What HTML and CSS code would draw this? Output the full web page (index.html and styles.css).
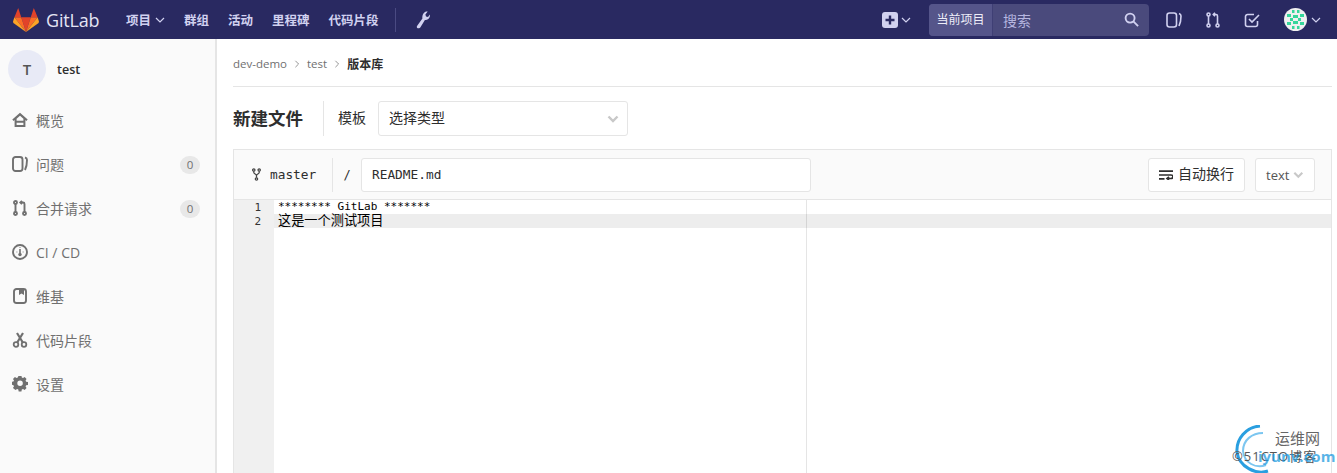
FILE: index.html
```html
<!DOCTYPE html>
<html lang="zh">
<head>
<meta charset="utf-8">
<title>新建文件</title>
<link rel="stylesheet" href="styles.css">
</head>
<body>
<header class="topbar">
  <a class="brand">
    <svg class="logo" viewBox="0 0 26 24" width="26" height="24">
      <polygon points="13,24 17.8,9.2 8.2,9.2" fill="#e24329"/>
      <polygon points="13,24 8.2,9.2 1.4,9.2" fill="#fc6d26"/>
      <polygon points="1.4,9.2 0,13.6 0.4,15 13,24" fill="#fca326"/>
      <polygon points="1.4,9.2 8.2,9.2 5.2,0" fill="#e24329"/>
      <polygon points="13,24 17.8,9.2 24.6,9.2" fill="#fc6d26"/>
      <polygon points="24.6,9.2 26,13.6 25.6,15 13,24" fill="#fca326"/>
      <polygon points="24.6,9.2 17.8,9.2 20.8,0" fill="#e24329"/>
    </svg>
    <span class="brand-name">GitLab</span>
  </a>
  <nav class="topnav">
    <a class="topnav-item">项目<svg class="chev" viewBox="0 0 10 6" width="10" height="6"><path d="M1 1l4 4 4-4"/></svg></a>
    <a class="topnav-item">群组</a>
    <a class="topnav-item">活动</a>
    <a class="topnav-item">里程碑</a>
    <a class="topnav-item">代码片段</a>
  </nav>
  <span class="topdivider"></span>
  <svg class="wrench" viewBox="0 0 14 18" width="14" height="18"><path d="M3 17.2c-1 .5-2.300-.2-2.200-1.400 0-.4.2-.8.4-1.100L6.400 7.400C6 5 6.900 2.200 9 1c.9-.4 1.800-.5 2.700-.4L9.400 3.400l.6 2 2 .5 1.900-2.500c.3 1.900-.4 3.900-2 4.900-1 .6-2 .8-3 .6L4.300 16.400c-.4.4-.8.700-1.300.8z"/></svg>
  <div class="topright">
    <span class="plus"><svg viewBox="0 0 16 16" width="16" height="16"><rect width="16" height="16" rx="3" fill="#d1d1f0"/><path d="M8 3.500v9M3.500 8h9" stroke="#292961" stroke-width="2.400"/></svg><svg class="chev" viewBox="0 0 10 6" width="10" height="6"><path d="M1 1l4 4 4-4"/></svg></span>
    <div class="search">
      <span class="search-scope">当前项目</span>
      <span class="search-input">搜索</span>
      <svg class="search-icon" viewBox="0 0 16 16" width="15" height="15"><circle cx="6.500" cy="6.500" r="4.800"/><path d="M10 10l5 5"/></svg>
    </div>
    <svg class="top-icon" viewBox="0 0 16 16" width="16" height="16"><rect x="1" y="1" width="9.500" height="14" rx="2.500"/><path d="M13 1.500c1.300.4 2 1.300 2 2.500 0 3-1 8-2 10"/></svg>
    <svg class="top-icon" viewBox="0 0 14 16" width="14" height="16"><circle cx="2.500" cy="2.500" r="1.500"/><circle cx="2.500" cy="13.500" r="1.500"/><circle cx="11.500" cy="13.500" r="1.500"/><path d="M2.500 4v8M11.500 12V4c0-1-.5-1.500-1.500-1.500H7.500M9 .8L7.300 2.500 9 4.200"/></svg>
    <svg class="top-icon" viewBox="0 0 16 16" width="16" height="16"><path d="M13.500 9v3.500a2 2 0 0 1-2 2h-8a2 2 0 0 1-2-2v-8a2 2 0 0 1 2-2H10M5 7l3 3 7-7"/></svg>
    <span class="avatar-wrap">
      <svg class="identicon" viewBox="0 0 23 23" width="23" height="23">
        <circle cx="11.500" cy="11.500" r="11.500" fill="#f0f0f0"/>
        <g fill="#36d69b"><rect x="8" y="2" width="2.500" height="3"/><rect x="13" y="2" width="2.500" height="3"/><rect x="3" y="6" width="4" height="3"/><rect x="16" y="6" width="4" height="3"/><rect x="9" y="7" width="5" height="3"/><rect x="6" y="10" width="3" height="3"/><rect x="14" y="10" width="3" height="3"/><rect x="3" y="14" width="4" height="3"/><rect x="16" y="14" width="4" height="3"/><rect x="9" y="13" width="5" height="3"/><rect x="8" y="18" width="2.500" height="3"/><rect x="13" y="18" width="2.500" height="3"/></g>
      </svg>
      <svg class="chev" viewBox="0 0 10 6" width="10" height="6"><path d="M1 1l4 4 4-4"/></svg>
    </span>
  </div>
</header>

<div class="layout">
  <aside class="sidebar">
    <div class="project">
      <span class="project-avatar">T</span>
      <span class="project-name">test</span>
    </div>
    <ul class="sidenav">
      <li class="sidenav-item"><svg class="side-icon" viewBox="0 0 16 16" width="16" height="16"><path class="solid" d="M8 .8L.3 7.500l1.300 1.500 1-.9V15h10.800V8.100l1 .9 1.300-1.500zM4.600 6.800L8 3.800l3.400 3v2H4.600zm0 4h6.800V13H4.600z"/></svg>概览</li>
      <li class="sidenav-item"><svg class="side-icon" viewBox="0 0 16 16" width="16" height="16"><rect x="1" y="1" width="9.500" height="14" rx="2.500"/><path d="M13 1.500c1.300.4 2 1.300 2 2.500 0 3-1 8-2 10"/></svg>问题<span class="count">0</span></li>
      <li class="sidenav-item"><svg class="side-icon" viewBox="0 0 14 16" width="16" height="16"><circle cx="2.500" cy="2.500" r="1.500"/><circle cx="2.500" cy="13.500" r="1.500"/><circle cx="11.500" cy="13.500" r="1.500"/><path d="M2.500 4v8M11.500 12V4c0-1-.5-1.500-1.500-1.500H7.500M9 .8L7.300 2.500 9 4.200"/></svg>合并请求<span class="count">0</span></li>
      <li class="sidenav-item"><svg class="side-icon" viewBox="0 0 16 16" width="16" height="16"><circle cx="8" cy="8" r="7"/><path d="M8 5v4" stroke-width="1.600"/><circle cx="8" cy="10.500" r="1.700" class="solid"/><path d="M4.500 8h.8M10.700 8h.8M8 3v.8" stroke-width="1.200"/></svg>CI / CD</li>
      <li class="sidenav-item"><svg class="side-icon" viewBox="0 0 16 16" width="16" height="16"><rect x="2" y="1" width="12" height="14" rx="2.500"/><path class="solid" d="M7 1h5v6l-2.500-1.500L7 7z"/></svg>维基</li>
      <li class="sidenav-item"><svg class="side-icon" viewBox="0 0 16 16" width="16" height="16"><circle cx="4" cy="12.500" r="2.300" stroke-width="1.800"/><circle cx="12" cy="12.500" r="2.300" stroke-width="1.800"/><path d="M5.200 10.500L11 1M10.800 10.500L5 1" stroke-width="2.200"/></svg>代码片段</li>
      <li class="sidenav-item"><svg class="side-icon" viewBox="0 0 16 16" width="16" height="16"><path class="solid" fill-rule="evenodd" d="M6.500 0h3l.4 2.100 1.300.6 1.800-1.100 2.100 2.100-1.100 1.800.6 1.300 2.100.4v3l-2.100.4-.6 1.300 1.100 1.800-2.100 2.100-1.800-1.100-1.300.6-.4 2.100h-3l-.4-2.100-1.300-.6-1.800 1.100L.3 13.600l1.100-1.800-.6-1.300L-1.300 10V7l2.100-.4.600-1.300L.3 3.700l2.100-2.100 1.800 1.100 1.300-.6zM8 5.500a3 3 0 1 0 0 6 3 3 0 0 0 0-6z" transform="translate(.7 -.5) scale(.92)"/></svg>设置</li>
    </ul>
  </aside>

  <main class="content">
    <div class="breadcrumbs">
      <a class="crumb">dev-demo</a>
      <svg class="crumb-sep" viewBox="0 0 6 10" width="6" height="8"><path d="M1 1l4 4-4 4"/></svg>
      <a class="crumb">test</a>
      <svg class="crumb-sep" viewBox="0 0 6 10" width="6" height="8"><path d="M1 1l4 4-4 4"/></svg>
      <strong class="crumb-current">版本库</strong>
    </div>

    <div class="title-row">
      <h1 class="page-title">新建文件</h1>
      <span class="title-divider"></span>
      <span class="template-label">模板</span>
      <div class="select template-select">选择类型<svg class="select-chev" viewBox="0 0 12 8" width="12" height="8"><path d="M1.500 1.500L6 6l4.500-4.500"/></svg></div>
    </div>

    <section class="file-holder">
      <div class="file-bar">
        <span class="branch"><svg class="fork" viewBox="0 0 10 14" width="9" height="13"><circle cx="2" cy="2" r="1.300"/><circle cx="8" cy="2" r="1.300"/><circle cx="5" cy="12" r="1.300"/><path d="M2 3.300v1.500c0 1.500 3 2 3 3.500v2.400M8 3.300v1.500C8 6.300 5 6.800 5 8.300"/></svg>master</span>
        <span class="slash">/</span>
        <div class="filename">README.md</div>
        <div class="file-actions">
          <div class="btn"><svg class="wrap-icon" viewBox="0 0 14 10" width="14" height="10"><path d="M0 1.200h14M0 5h12c1.500 0 2 .8 2 1.500S13.500 8.500 12 8.500H8.500M10 6.800L8 8.500l2 1.500M0 8.800h5.500"/></svg><span class="btn-label">自动换行</span></div>
          <div class="btn mode">text<svg class="select-chev" viewBox="0 0 12 8" width="12" height="8"><path d="M1.500 1.500L6 6l4.500-4.500"/></svg></div>
        </div>
      </div>
      <div class="editor">
        <div class="gutter"><div class="gutter-line">1</div><div class="gutter-line">2</div></div>
        <div class="code">
          <div class="print-margin"></div>
          <div class="code-line">******** GitLab *******</div>
          <div class="code-line active">这是一个测试项目</div>
        </div>
      </div>
    </section>
  </main>
</div>

<div class="watermark">
  <svg class="wm-arc" viewBox="0 0 50 50" width="50" height="50"><path d="M36 46C24 50 7 42 5 27 4 14 14 2 28 1" stroke="#2a9fe0" stroke-width="3" fill="none"/><path d="M34 40C24 44 12 38 11 26 11 15 20 8 31 8" stroke="#7cc6f0" stroke-width="2" fill="none"/></svg>
  <span class="wm-top">运维网</span>
  <span class="wm-gray">©51CTO博客</span>
  <span class="wm-blue">iyunv.com</span>
</div>
</body>
</html>
```
FILE: styles.css
```css
* { box-sizing: border-box; }
html, body { margin: 0; height: 100%; overflow: hidden; }
body {
  font-family: "Open Sans", "Noto Sans CJK SC", sans-serif;
  font-size: 14px;
  color: #2e2e2e;
  background: #fff;
}
.topbar {
  height: 39px;
  background: #292961;
  display: flex;
  align-items: center;
  padding-left: 13px;
  color: #d1d1f0;
}
.brand { display: flex; align-items: center; gap: 7px; }
.brand-name { font-size: 18px; color: #e4e4f4; width: 53px; letter-spacing: -.2px; }
.topnav { display: flex; align-items: center; margin-left: 27px; }
.topnav-item {
  display: flex; align-items: center; gap: 4px;
  font-size: 12.500px; font-weight: 700; color: #d1d1f0;
  margin-right: 19px;
}
.topnav-item:last-child { margin-right: 0; }
.chev { fill: none; stroke: #d1d1f0; stroke-width: 1.200; }
.topdivider { width: 1px; height: 24px; background: #4a4a82; margin-left: 16px; }
.wrench { margin-left: 20px; fill: #d1d1f0; }
.topright { margin-left: auto; display: flex; align-items: center; padding-right: 16px; }
.plus { display: flex; align-items: center; gap: 3px; margin-right: 18px; }
.search {
  width: 220px; height: 32px;
  background: #4a4a7c;
  border-radius: 4px;
  display: flex; align-items: center;
  position: relative;
  margin-right: 17px;
}
.search-scope {
  width: 64px; height: 32px; line-height: 32px; text-align: center;
  font-size: 12px; color: #eeeef8;
  background: #55558a;
  border-right: 1px solid #3f3f75;
  border-radius: 4px 0 0 4px;
}
.search-input { margin-left: 10px; color: #b6b6e0; font-size: 14px; }
.search-icon { position: absolute; right: 10px; top: 8px; fill: none; stroke: #d1d1f0; stroke-width: 2; }
.top-icon { fill: none; stroke: #d1d1f0; stroke-width: 1.600; margin-right: 24px; }
.avatar-wrap { display: flex; align-items: center; gap: 4px; }
.identicon { display: block; }
.layout { display: flex; height: 434px; }
.sidebar {
  width: 217px; flex: none;
  background: #fafafa;
  border-right: 2px solid #e5e5e5;
}
.project { display: flex; align-items: center; height: 59px; padding: 1px 8px 0; }
.project-avatar {
  width: 38px; height: 38px; border-radius: 50%;
  background: #e8eaf6; color: #555;
  font-size: 15px; font-weight: 600;
  display: flex; align-items: center; justify-content: center;
}
.project-name { margin-left: 11px; font-weight: 600; font-size: 12.500px; color: #2e2e2e; }
.sidenav { list-style: none; margin: 0; padding: 0; }
.sidenav-item {
  height: 44px; display: flex; align-items: center;
  padding: 0 15px 0 12px; color: #707070; font-size: 14px;
}
.side-icon { fill: none; stroke: #707070; stroke-width: 1.900; margin-right: 8px; flex: none; }
.side-icon .solid { fill: #707070; stroke: none; }
.count {
  margin-left: auto; margin-top: 1px; width: 20px; height: 18px; border-radius: 9px;
  background: #e8e8e8; color: #707070; font-size: 11.500px; text-align: center; line-height: 18px;
}
.content { flex: 1; padding: 0 5px 0 16px; min-width: 0; }
.breadcrumbs {
  height: 48px; display: flex; align-items: center; gap: 7px;
  border-bottom: 1px solid #e5e5e5;
  padding-top: 2px;
  font-size: 11.500px;
}
.crumb { color: #707070; }
.crumb-sep { fill: none; stroke: #909090; stroke-width: 1.200; }
.crumb-current { color: #2e2e2e; font-weight: 700; font-size: 12px; }
.title-row { display: flex; align-items: center; height: 35px; margin-top: 14px; }
.page-title { margin: 0 0 3px; font-size: 17.500px; font-weight: 700; color: #2e2e2e; }
.title-divider { width: 1px; height: 35px; background: #e5e5e5; margin: 0 14px 0 20px; }
.template-label { font-size: 14px; color: #2e2e2e; margin: 0 12px 3px 0; }
.select {
  background: #fff; border: 1px solid #e5e5e5; border-radius: 3px;
  display: flex; align-items: center; justify-content: space-between;
}
.template-select { width: 250px; height: 35px; padding: 0 8px 3px 10px; font-size: 14px; color: #2e2e2e; }
.template-select .select-chev { margin-top: 3px; }
.select-chev { fill: none; stroke: #c8c8c8; stroke-width: 2.400; }
.file-holder { margin-top: 13px; border: 1px solid #e5e5e5; border-bottom: 0; }
.file-bar {
  height: 50px; background: #fafafa; border-bottom: 1px solid #e5e5e5;
  display: flex; align-items: center; padding: 0 16px;
}
.branch {
  display: flex; align-items: center; gap: 9px; height: 34px; width: 83px;
  border-right: 1px solid #e5e5e5;
  font-family: "DejaVu Sans Mono", "Liberation Mono", monospace; font-size: 12.800px; color: #2e2e2e;
}
.fork { fill: none; stroke: #444; stroke-width: 1.400; margin-left: 2px; }
.slash { width: 28px; text-align: center; font-family: "DejaVu Sans Mono", monospace; font-size: 12px; }
.filename {
  width: 450px; height: 34px; background: #fff; border: 1px solid #e5e5e5; border-radius: 3px;
  padding: 0 10px; line-height: 32px;
  font-family: "DejaVu Sans Mono", monospace; font-size: 12.800px; color: #2e2e2e;
}
.file-actions { margin-left: auto; display: flex; gap: 10px; }
.btn {
  height: 34px; background: #fff; border: 1px solid #e5e5e5; border-radius: 3px;
  display: flex; align-items: center; padding: 0 10px; font-size: 14px; color: #2e2e2e; gap: 4px;
}
.btn-label { margin-bottom: 3px; }
.mode { width: 60px; color: #555; font-size: 13px; gap: 4px; }
.wrap-icon { fill: none; stroke: #2e2e2e; stroke-width: 1.700; margin-right: 1px; }
.editor { display: flex; height: 274px; }
.gutter { width: 40px; background: #f0f0f0; padding: 1px 13px 0 0; flex: none; }
.gutter-line {
  height: 14px; line-height: 14px; text-align: right;
  font-family: "DejaVu Sans Mono", monospace; font-size: 11px; color: #333;
}
.code { flex: 1; position: relative; background: #fff; }
.print-margin { position: absolute; left: 532px; top: 0; bottom: 0; width: 1px; background: #e5e5e5; }
.code-line {
  height: 14px; line-height: 14px; padding-left: 4px; position: relative;
  font-family: "DejaVu Sans Mono", "Noto Sans CJK SC", monospace; font-size: 11px; color: #000;
}
.code-line.active { background: rgba(0,0,0,.07); font-size: 13.200px; }
.watermark { position: absolute; left: 1232px; top: 425px; width: 105px; height: 48px; }
.wm-arc { position: absolute; left: 0; top: 0; }
.wm-top { position: absolute; left: 43px; top: 2px; font-size: 15px; color: #666; }
.wm-gray { position: absolute; left: 0; top: 21px; font-size: 13px; color: #555; letter-spacing: 1px; white-space: nowrap; }
.wm-blue { position: absolute; left: 26px; top: 21px; font-size: 15px; font-weight: 700; color: #1f9be0; opacity: .75; white-space: nowrap; }
```
